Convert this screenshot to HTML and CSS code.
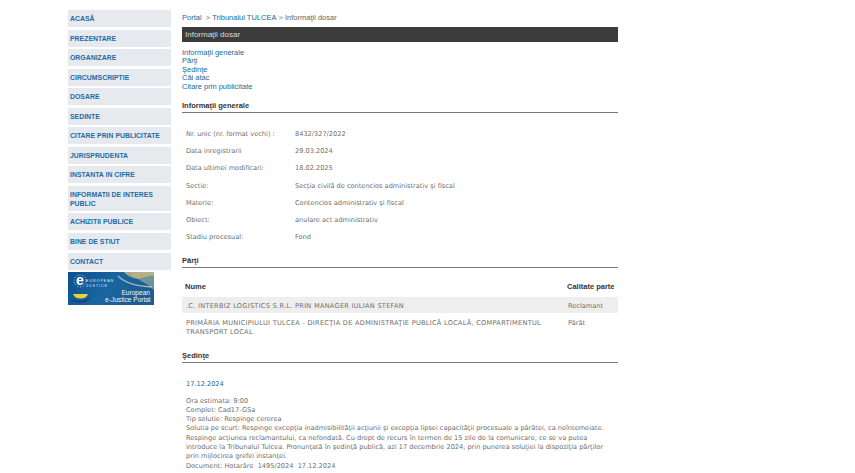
FILE: index.html
```html
<!DOCTYPE html>
<html lang="ro">
<head>
<meta charset="utf-8">
<title>Informații dosar</title>
<link rel="stylesheet" href="styles.css">
</head>
<body>
<div class="page">
  <nav class="side">
    <ul class="menu">
      <li>ACASĂ</li>
      <li>PREZENTARE</li>
      <li>ORGANIZARE</li>
      <li>CIRCUMSCRIPTIE</li>
      <li>DOSARE</li>
      <li>SEDINTE</li>
      <li>CITARE PRIN PUBLICITATE</li>
      <li>JURISPRUDENTA</li>
      <li>INSTANTA IN CIFRE</li>
      <li>INFORMATII DE INTERES PUBLIC</li>
      <li>ACHIZITII PUBLICE</li>
      <li>BINE DE STIUT</li>
      <li>CONTACT</li>
    </ul>
    <svg class="logo" width="86" height="33" viewBox="0 0 86 33">
      <defs>
        <linearGradient id="sky" x1="0" y1="0" x2="1" y2="0.3">
          <stop offset="0" stop-color="#0d4f8e"/>
          <stop offset="0.55" stop-color="#1a659f"/>
          <stop offset="1" stop-color="#1c5c90"/>
        </linearGradient>
      </defs>
      <rect width="86" height="33" fill="url(#sky)"/>
      <path d="M42 0 L62 0 C66 6 74 9 80 13 L86 18 L86 0 Z" fill="#8fae9f" opacity=".7"/>
      <path d="M56 0 C60 5 68 8 74 6 C78 5 82 3 86 4 L86 0 Z" fill="#c9b780" opacity=".8"/>
      <path d="M50 4 C58 12 70 14 84 15" fill="none" stroke="#d5dcc8" stroke-width="1.4" opacity=".7"/>
      <path d="M5 22 H20 C19 25 16 26.500 12.500 26.500 C9 26.500 6 25 5 22 Z" fill="#e8d23a"/>
      <path d="M2 27 C8 30 18 30 23 25 C19 32 7 32 2 27 Z" fill="#16397f"/>
      <circle cx="12" cy="9" r="6" fill="none" stroke="#e6eef5" stroke-width=".8" stroke-dasharray="1 1.700"/>
      <text x="12" y="13" class="logo-e">e</text>
      <text x="18" y="9.500" class="logo-small">EUROPEAN</text>
      <text x="18" y="14.500" class="logo-small">JUSTICE</text>
      <text x="82" y="22.500" class="logo-big">European</text>
      <text x="82.500" y="29.500" class="logo-big">e-Justice Portal</text>
    </svg>
  </nav>
  <main class="content">
    <div class="crumbs"><a>Portal</a> <span class="sep">&nbsp;&gt;&nbsp;</span><a>Tribunalul TULCEA</a><span class="sep">&nbsp;&gt;&nbsp;</span><span class="here">Informaţii dosar</span></div>
    <h1 class="bar">Informaţii dosar</h1>
    <div class="anchors">
      <a>Informaţii generale</a>
      <a>Părţi</a>
      <a>Şedinţe</a>
      <a>Căi atac</a>
      <a>Citare prin publicitate</a>
    </div>
    <h2 class="section first">Informaţii generale</h2>
    <dl class="facts">
      <dt>Nr. unic (nr. format vechi) :</dt><dd>8432/327/2022</dd>
      <dt>Data inregistrarii</dt><dd>29.03.2024</dd>
      <dt>Data ultimei modificari:</dt><dd>18.02.2025</dd>
      <dt>Sectie:</dt><dd>Secţia civilă de contencios administrativ şi fiscal</dd>
      <dt>Materie:</dt><dd>Contencios administrativ şi fiscal</dd>
      <dt>Obiect:</dt><dd>anulare act administrativ</dd>
      <dt>Stadiu procesual:</dt><dd>Fond</dd>
    </dl>
    <h2 class="section parts">Părţi</h2>
    <table class="parties">
      <thead><tr><th>Nume</th><th>Calitate parte</th></tr></thead>
      <tbody>
        <tr class="odd"><td>.C. INTERBIZ LOGISTICS S.R.L. PRIN MANAGER IULIAN STEFAN</td><td>Reclamant</td></tr>
        <tr><td>PRIMĂRIA MUNICIPIULUI TULCEA - DIRECŢIA DE ADMINISTRAŢIE PUBLICĂ LOCALĂ, COMPARTIMENTUL TRANSPORT LOCAL</td><td>Pârât</td></tr>
      </tbody>
    </table>
    <h2 class="section hearings">Şedinţe</h2>
    <div class="hearing">
      <a class="date">17.12.2024</a>
      <p>Ora estimata: 9:00<br>
      Complet: Cad17-GSa<br>
      Tip solutie: Respinge cererea<br>
      Solutia pe scurt: Respinge excepţia inadmisibilităţii acţiunii şi excepţia lipsei capacităţii procesuale a pârâtei, ca neîntemeiate. Respinge acţiunea reclamantului, ca nefondată. Cu drept de recurs în termen de 15 zile de la comunicare, ce se va putea introduce la Tribunalul Tulcea. Pronunţată în şedinţă publică, azi 17 decembrie 2024, prin punerea soluţiei la dispoziţia părţilor prin mijlocirea grefei instanţei.<br>
      Document: Hotarâre&nbsp; 1495/2024&nbsp; 17.12.2024</p>
    </div>
  </main>
</div>
</body>
</html>
```
FILE: styles.css
```css
html, body { margin: 0; padding: 0; height: 473px; overflow: hidden; background: #fff; }
body { font-family: "Liberation Sans", Arial, sans-serif; }
.page { display: flex; gap: 11px; padding: 10px 0 0 68px; width: 550px; }
.side { width: 103px; flex: none; }
.menu { list-style: none; margin: 0 0 2px; padding: 0; display: flex; flex-direction: column; gap: 2.55px; }
.menu li { min-height: 17px; box-sizing: border-box; padding: 4px 2px 3px; background: #e6eaef; color: #1f6aa5; font-size: 6.9px; font-weight: bold; line-height: 9px; }
.logo { display: block; margin-top: 0; }
.logo-e { font: bold 14px "Liberation Sans", sans-serif; fill: #fff; text-anchor: middle; }
.logo-small { font: 3.6px "Liberation Sans", sans-serif; fill: #e6eef5; letter-spacing: 1px; }
.logo-big { font: 6.6px "Liberation Sans", sans-serif; fill: #f2f5f7; text-anchor: end; }
.content { width: 436px; flex: none; color: #6e6e6e; font-family: "DejaVu Sans", Verdana, sans-serif; font-size: 6.6px; }
a { color: #1a6a96; }
.crumbs { font-family: "Liberation Sans", sans-serif; font-size: 7.5px; line-height: 10px; margin-top: 2.5px; color: #666; }
.sep { color: #777; }
.bar { margin: 4.500px 0 0; height: 14.5px; padding-top: 1px; box-sizing: border-box; background: #3c3c3c; color: #ddd; font: normal 8px/13.5px "Liberation Sans", sans-serif; padding-left: 3px; }
.anchors { margin-top: 7px; display: flex; flex-direction: column; font-family: "Liberation Sans", sans-serif; font-size: 7.5px; line-height: 8.6px; }
.section { margin: 0; font: bold 7.5px/12px "Liberation Sans", sans-serif; color: #333; border-bottom: 1px solid #777; padding-top: 1px; }
.first { margin-top: 7.500px; }
.parts { margin-top: 7.5px; }
.hearings { margin-top: 8.6px; }
.facts { margin: 12px 0 0 4px; display: grid; grid-template-columns: 109px 1fr; grid-auto-rows: 17.3px; align-items: center; }
.facts dt, .facts dd { margin: 0; line-height: 10px; white-space: nowrap; }
.parties { width: 100%; border-collapse: collapse; margin-top: 7px; table-layout: fixed; }
.parties th { font: bold 7.5px/10px "Liberation Sans", sans-serif; color: #333; text-align: left; padding: 7px 0 5px 3px; white-space: nowrap; }
.parties th:first-child, .parties td:first-child { width: 379px; }
.parties td { padding: 5.5px 3px 2px 4px; vertical-align: top; line-height: 9.7px; }
.parties td:first-child { letter-spacing: .27px; }
.parties tr.odd td { background: #eee; padding: 4.5px 3px 2px 4px; line-height: 10px; }
.hearing { margin: 16px 0 0 4px; }
.date { display: block; line-height: 10px; }
.hearing p { margin: 8px 0 0; line-height: 9.3px; }
```
